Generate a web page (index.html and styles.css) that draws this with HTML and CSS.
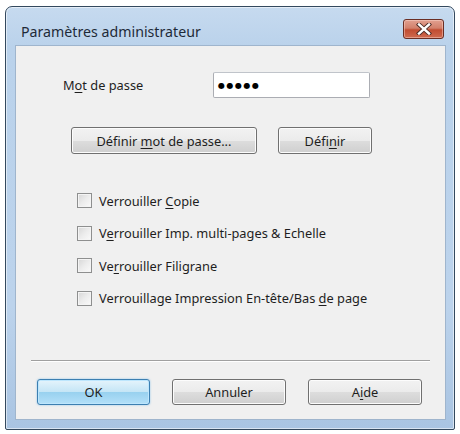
FILE: index.html
```html
<!DOCTYPE html>
<html lang="fr">
<head>
<meta charset="utf-8">
<title>Paramètres administrateur</title>
<link rel="stylesheet" href="styles.css">
</head>
<body>
<div class="window">
  <div class="titlebar">
    <span class="title">Paramètres administrateur</span>
    <button class="close" aria-label="Fermer">
      <svg width="16" height="12" viewBox="0 0 16 12">
        <path d="M3 1.5 L13 10.5 M13 1.5 L3 10.5" stroke="#4a2a24" stroke-width="4.2" stroke-linecap="square" fill="none"/>
        <path d="M3 1.5 L13 10.5 M13 1.5 L3 10.5" stroke="#ffffff" stroke-width="2.4" stroke-linecap="square" fill="none"/>
      </svg>
    </button>
  </div>
  <div class="content">
    <div class="pwrow">
      <span class="label">M<u>o</u>t de passe</span>
      <div class="input"><span class="dots">●●●●●</span></div>
    </div>
    <div class="btnrow">
      <button class="btn btn-wide">Définir <u>m</u>ot de passe...</button>
      <button class="btn btn-def">Défi<u>n</u>ir</button>
    </div>
    <div class="checks">
      <label class="check"><span class="box"></span><span>Verrouiller <u>C</u>opie</span></label>
      <label class="check"><span class="box"></span><span>V<u>e</u>rrouiller Imp. multi-pages &amp; Echelle</span></label>
      <label class="check"><span class="box"></span><span>Ve<u>r</u>rouiller Filigrane</span></label>
      <label class="check"><span class="box"></span><span>Verrouillage Impression En-tête/Bas <u>d</u>e page</span></label>
    </div>
    <div class="sep"></div>
    <div class="footer">
      <button class="btn btn-foot btn-ok">OK</button>
      <button class="btn btn-foot">Annuler</button>
      <button class="btn btn-foot">A<u>i</u>de</button>
    </div>
  </div>
</div>
</body>
</html>
```

FILE: styles.css
```css
html, body {
  margin: 0;
  padding: 0;
  background: #ffffff;
}
body {
  font-family: "Noto Sans", "Open Sans", sans-serif;
  font-size: 12.8px;
  color: #1e1e1e;
}
u {
  text-decoration: underline;
  text-underline-offset: 2px;
  text-decoration-thickness: 1px;
}
.window {
  margin: 6px 0 0 5px;
  width: 450px;
  height: 424px;
  box-sizing: border-box;
  border: 1px solid #34495e;
  border-radius: 7px 7px 2px 2px;
  background: linear-gradient(to bottom, #c6daef 0px, #bad2eb 40px, #bcd3ec 300px, #a9c4e2 100%);
  padding: 0 8px 9px 9px;
  display: flex;
  flex-direction: column;
  box-shadow: inset 0 0 0 1px rgba(255,255,255,0.55);
}
.titlebar {
  height: 38px;
  flex: none;
  display: flex;
  align-items: flex-start;
  justify-content: space-between;
}
.title {
  margin: 15px 0 0 6px;
  font-size: 14.2px;
  color: #1e2a38;
}
.close {
  margin: 12px 2px 0 0;
  width: 41px;
  height: 20px;
  border: 1px solid #6a2e24;
  border-radius: 3px;
  background: linear-gradient(to bottom, #e2a090 0%, #d2806b 45%, #c14c31 55%, #cf6a4f 100%);
  box-shadow: inset 0 0 0 1px rgba(255,220,210,0.45);
  padding: 0;
  display: flex;
  align-items: center;
  justify-content: center;
}
.content {
  flex: 1;
  background: #f0f0f0;
  border: 1px solid #9fb5cd;
}
.pwrow {
  display: flex;
  align-items: center;
  margin: 26px 0 0 47px;
}
.label {
  width: 150px;
}
.input {
  width: 157px;
  height: 26px;
  box-sizing: border-box;
  border: 1px solid #abadb3;
  border-top-color: #c0c4ca;
  border-radius: 2px;
  background: #ffffff;
  display: flex;
  align-items: center;
  padding-left: 4px;
}
.dots {
  font-family: "DejaVu Sans", sans-serif;
  font-size: 8px;
  letter-spacing: 1.5px;
  color: #000;
}
.btn {
  font-family: inherit;
  font-size: 12.8px;
  color: #1e1e1e;
  height: 27px;
  box-sizing: border-box;
  border: 1px solid #707070;
  border-radius: 3px;
  background: linear-gradient(to bottom, #f2f2f2 0%, #ebebeb 50%, #dddddd 51%, #cfcfcf 100%);
  box-shadow: inset 0 0 0 1px #fcfcfc;
  padding: 0;
}
.btnrow {
  display: flex;
  gap: 21px;
  margin: 29px 0 0 55px;
}
.btn-wide { width: 186px; }
.btn-def { width: 94px; }
.checks {
  display: flex;
  flex-direction: column;
  gap: 17.5px;
  margin: 39px 0 0 61px;
}
.check {
  display: flex;
  align-items: center;
  gap: 7px;
  height: 15px;
  white-space: nowrap;
}
.box {
  width: 15px;
  height: 15px;
  box-sizing: border-box;
  border: 1px solid #8e8f8f;
  background: linear-gradient(135deg, #d6d6d6 0%, #ececec 50%, #fafafa 100%);
  box-shadow: inset 0 0 0 1px #f4f4f4;
  flex: none;
}
.sep {
  margin: 54px 0 0 15px;
  width: 399px;
  height: 1px;
  background: #a0a0a0;
  border-bottom: 1px solid #ffffff;
}
.footer {
  display: flex;
  gap: 22px;
  margin: 17px 0 0 21px;
}
.btn-foot {
  width: 114px;
  height: 26px;
}
.btn-ok {
  width: 113px;
  border-color: #3c7fb1;
  background: linear-gradient(to bottom, #e5f4fc 0%, #c4e5f6 50%, #98d1ef 51%, #b3e0f9 100%);
  box-shadow: inset 0 0 0 1px #bde6fd, 0 0 2px rgba(60,160,230,0.6);
}
```
